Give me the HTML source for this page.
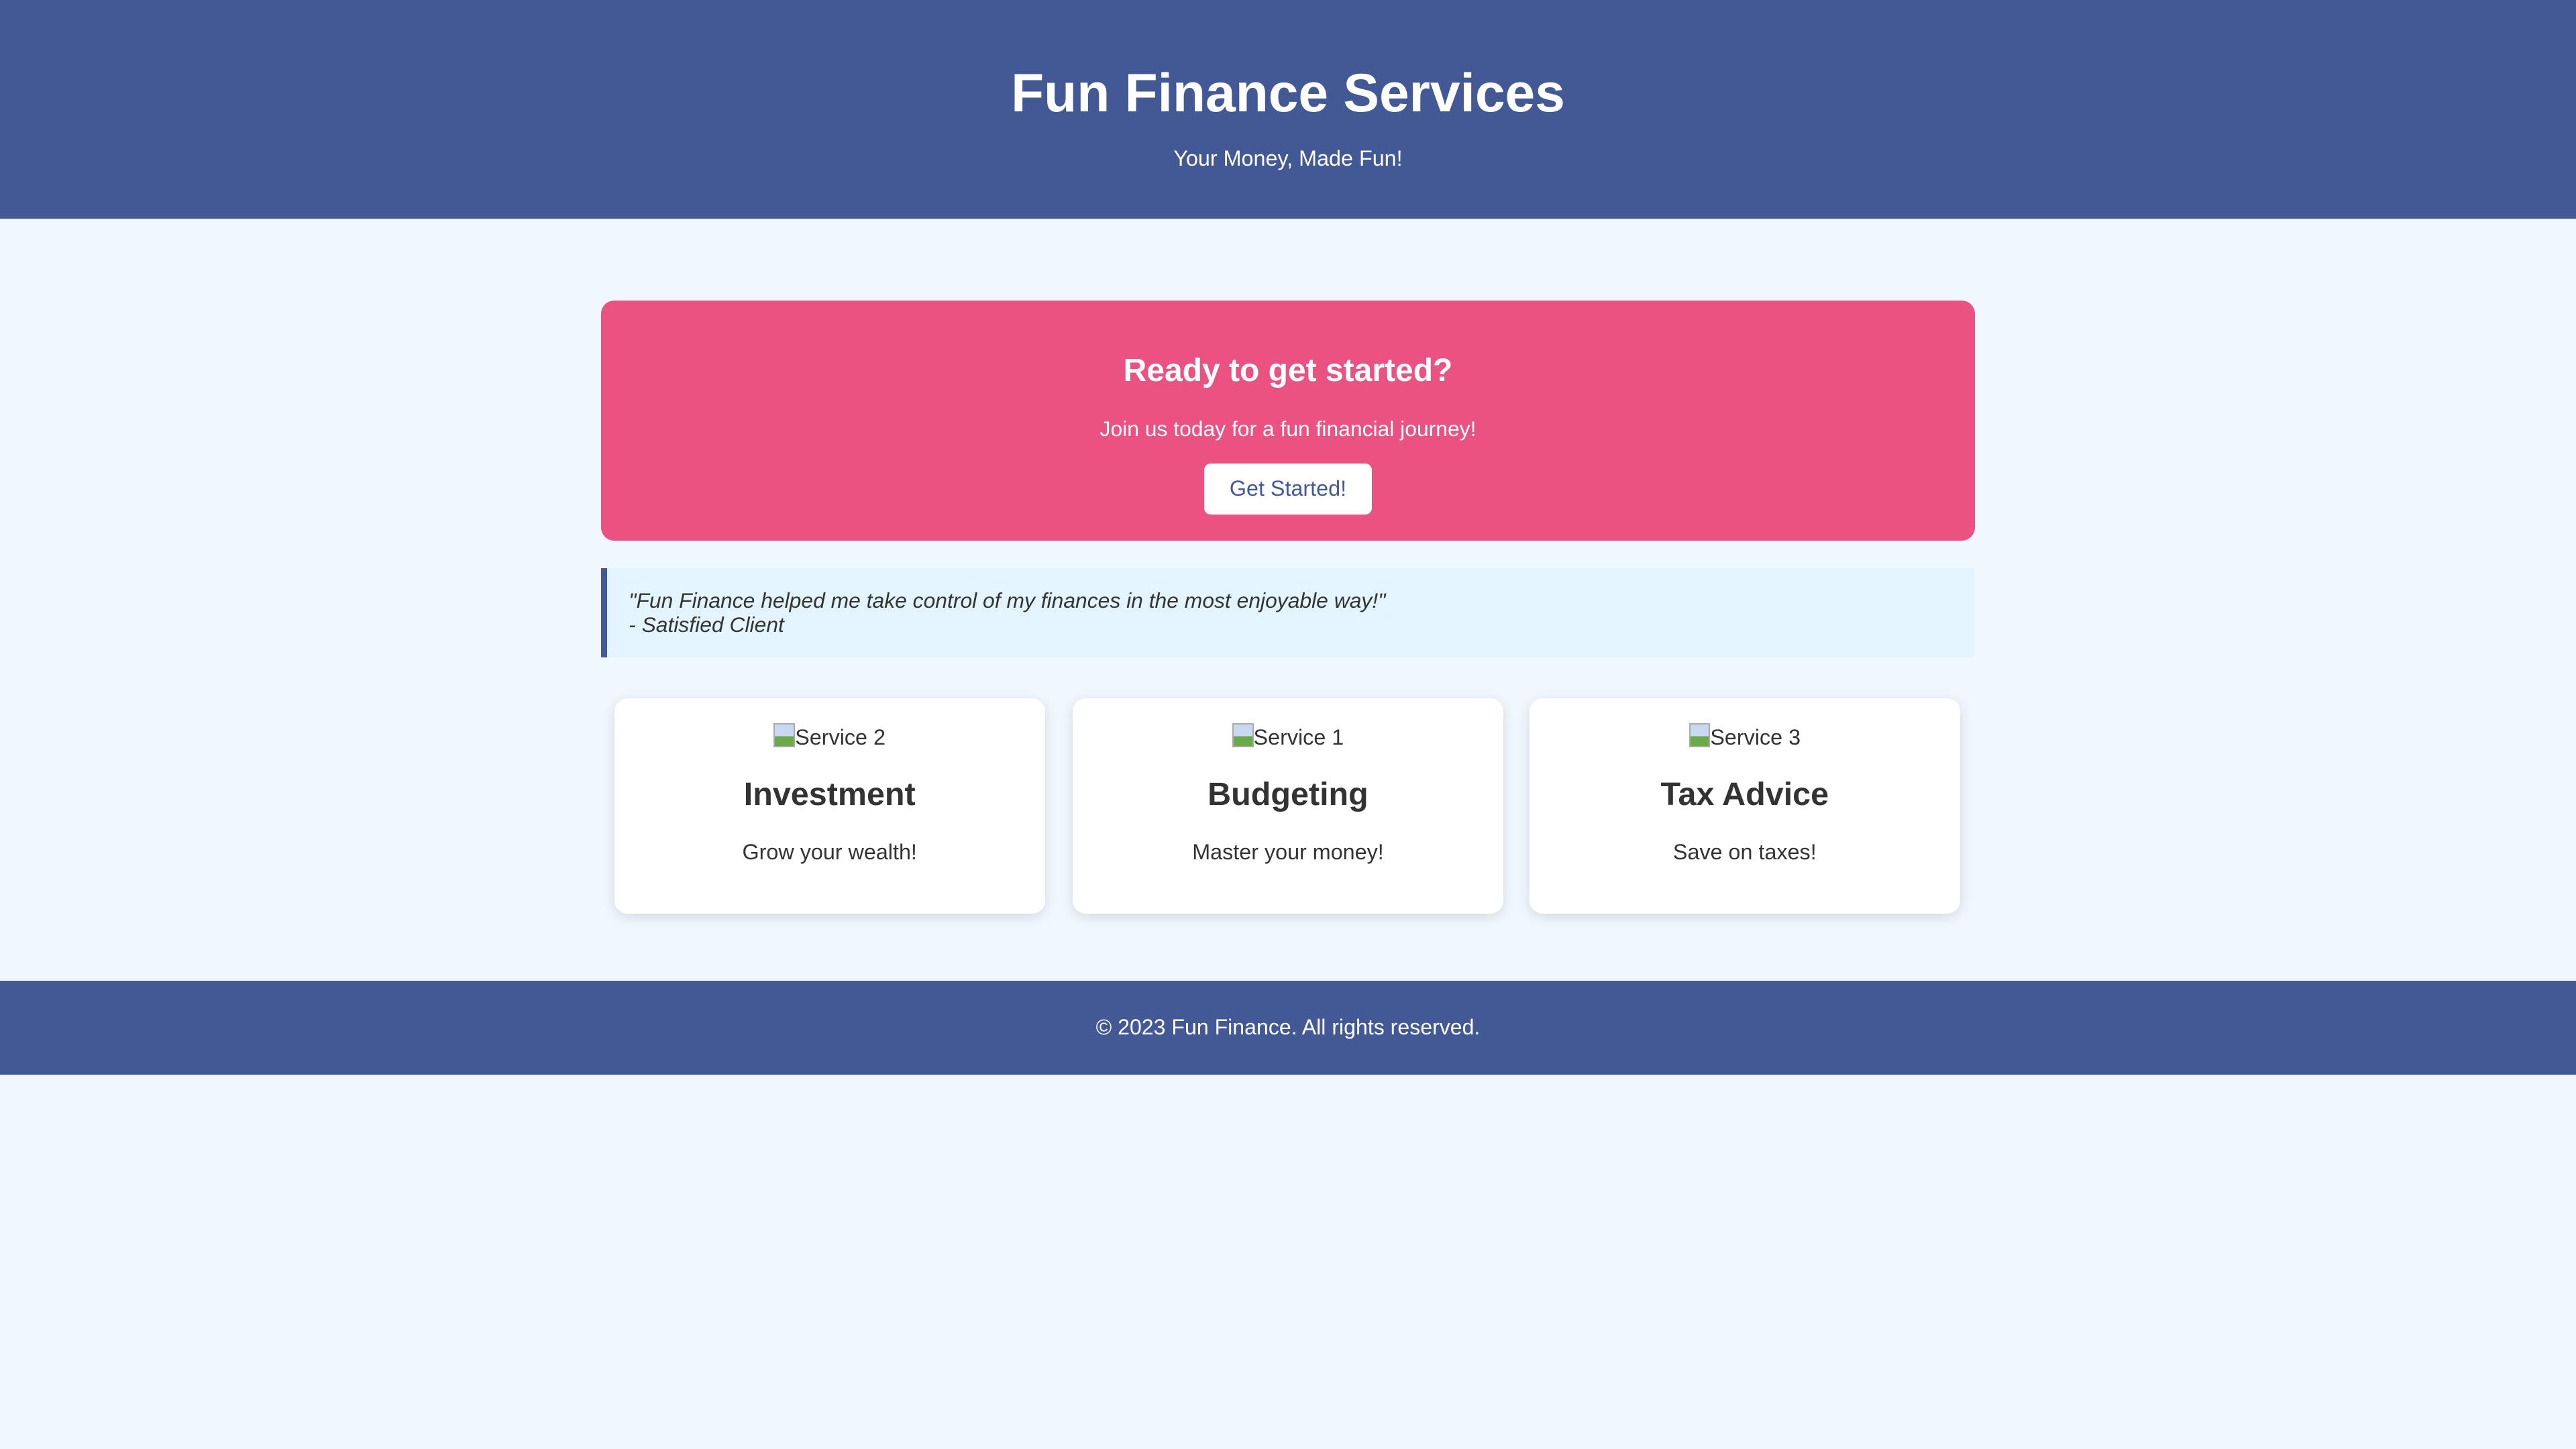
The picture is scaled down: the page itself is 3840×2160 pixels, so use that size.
<!DOCTYPE html>
<html><head><meta charset="utf-8"><style>
html,body{margin:0;padding:0;background:#f1f7fe;}
body{width:3840px;height:2160px;overflow:hidden;}
#w{zoom:2.44898;width:1568px;height:882px;position:relative;font-family:"Liberation Sans",Arial,sans-serif;color:#333;}
.hdr{position:absolute;left:0;top:0;width:1568px;height:133px;background:#425996;color:#fff;text-align:center;}
.hdr h1{position:absolute;left:0;right:0;top:37px;margin:0;font-size:32.8px;line-height:40px;font-weight:bold;}
.hdr p{position:absolute;left:0;right:0;top:88px;margin:0;font-size:13.2px;line-height:17px;}
.cta{position:absolute;left:366px;top:183px;width:836px;height:146px;background:#ea5381;border-radius:8px;color:#fff;text-align:center;}
.t1{position:absolute;left:0;right:0;top:31px;font-size:19.6px;font-weight:bold;line-height:24px;}
.t2{position:absolute;left:0;right:0;top:70px;font-size:13px;line-height:16px;}
.btn{position:absolute;left:367px;top:99px;width:102px;height:31px;background:#fff;border-radius:4px;color:#425996;font-size:13.2px;line-height:31px;}
.q{position:absolute;left:366px;top:346px;width:832px;height:54px;border-left:4px solid #425996;background:#e3f4fc;font-style:italic;font-size:13px;line-height:15px;color:#333;}
.q div{position:absolute;left:13px;top:12px;}
.card{position:absolute;top:425px;width:262px;height:131px;background:#fff;border-radius:8px;box-shadow:0 2px 8px rgba(0,0,0,0.12);text-align:center;}
.card .a{position:absolute;left:0;right:0;top:15px;font-size:13.2px;line-height:16px;}
.card .a i{display:inline-block;width:13px;height:15px;vertical-align:-2px;background:linear-gradient(#c9d9f2,#c9d9f2 55%,#6aaa4a 55%);border:1px solid #aaa;box-sizing:border-box;}
.card .h{position:absolute;left:0;right:0;top:46px;font-size:19.8px;font-weight:bold;line-height:26px;}
.card .p{position:absolute;left:0;right:0;top:86px;font-size:13.2px;line-height:16px;}
.ftr{position:absolute;left:0;top:597px;width:1568px;height:57px;background:#425996;color:#fff;text-align:center;font-size:13.1px;line-height:57px;}
</style></head><body><div id="w">
<div class="hdr"><h1>Fun Finance Services</h1><p>Your Money, Made Fun!</p></div>
<div class="cta"><div class="t1">Ready to get started?</div><div class="t2">Join us today for a fun financial journey!</div><div class="btn">Get Started!</div></div>
<div class="q"><div>"Fun Finance helped me take control of my finances in the most enjoyable way!"<br>- Satisfied Client</div></div>
<div class="card" style="left:374px"><div class="a"><i></i>Service 2</div><div class="h">Investment</div><div class="p">Grow your wealth!</div></div>
<div class="card" style="left:653px"><div class="a"><i></i>Service 1</div><div class="h">Budgeting</div><div class="p">Master your money!</div></div>
<div class="card" style="left:931px"><div class="a"><i></i>Service 3</div><div class="h">Tax Advice</div><div class="p">Save on taxes!</div></div>
<div class="ftr">© 2023 Fun Finance. All rights reserved.</div>
</div></body></html>
